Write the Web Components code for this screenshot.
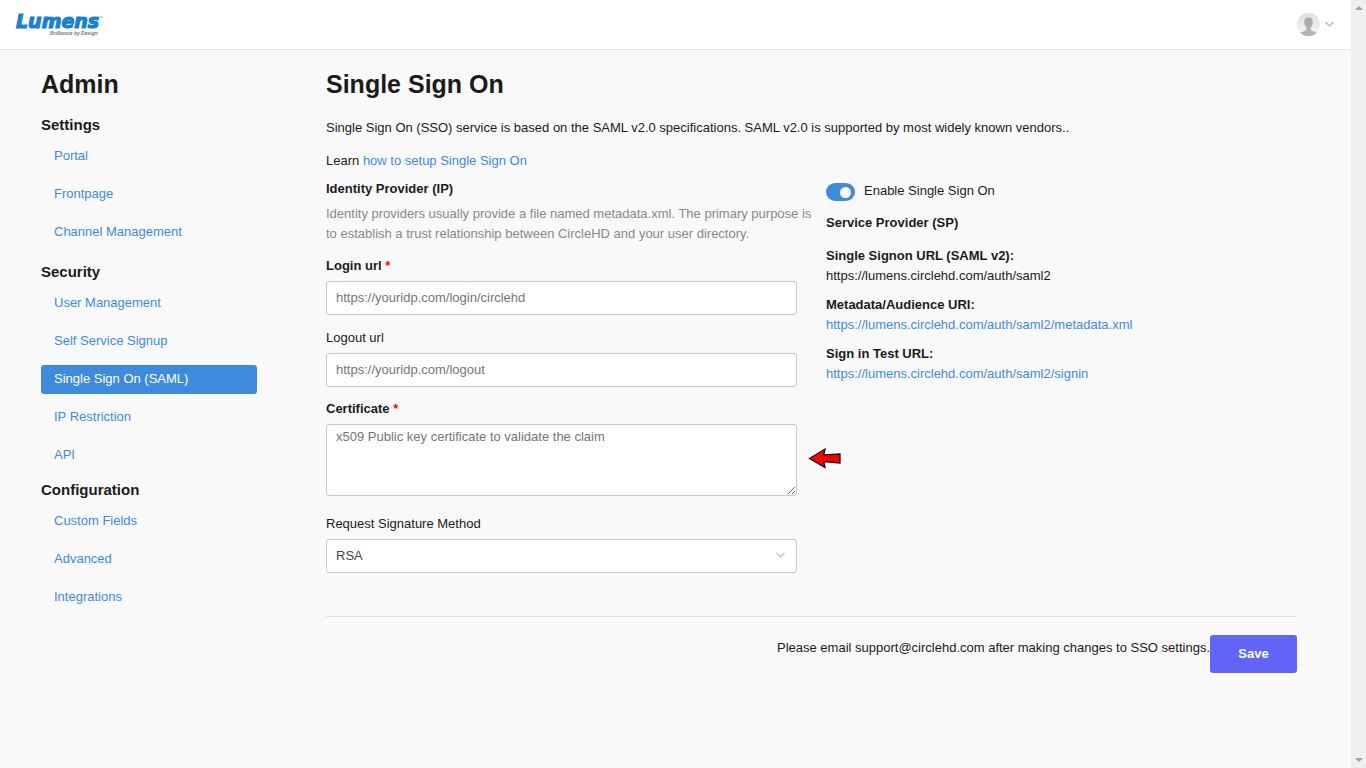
<!DOCTYPE html>
<html lang="en">
<head>
<meta charset="utf-8">
<title>Single Sign On - Admin</title>
<style>
  body { margin: 0; background: #f9f9f9; color: #1b1b1b; font: 13px/20px "Liberation Sans", Arial, sans-serif; }
</style>
</head>
<body>
<app-shell>
  <top-bar slot="header"></top-bar>
  <side-nav slot="nav">
    <nav-group heading="Settings">
      <nav-item>Portal</nav-item>
      <nav-item>Frontpage</nav-item>
      <nav-item>Channel Management</nav-item>
    </nav-group>
    <nav-group heading="Security">
      <nav-item>User Management</nav-item>
      <nav-item>Self Service Signup</nav-item>
      <nav-item active>Single Sign On (SAML)</nav-item>
      <nav-item>IP Restriction</nav-item>
      <nav-item>API</nav-item>
    </nav-group>
    <nav-group heading="Configuration" compact>
      <nav-item>Custom Fields</nav-item>
      <nav-item>Advanced</nav-item>
      <nav-item>Integrations</nav-item>
    </nav-group>
  </side-nav>
  <sso-page></sso-page>
</app-shell>

<script>
const define = (name, markup, setup) => {
  const template = document.createElement('template');
  template.innerHTML = markup;
  customElements.define(name, class extends HTMLElement {
    constructor() {
      super();
      this.attachShadow({ mode: 'open' }).append(template.content.cloneNode(true));
    }
    connectedCallback() { if (setup) setup(this, this.shadowRoot); }
  });
};

define('app-shell', `
  <style>
    :host { display: flex; min-height: 100vh; }
    .page { flex: 1; min-width: 0; }
    .body { display: grid; grid-template-columns: 216px minmax(0, 1fr); gap: 69px; padding: 18px 54px 40px 41px; }
  </style>
  <div class="page">
    <slot name="header"></slot>
    <div class="body"><slot name="nav"></slot><slot></slot></div>
  </div>
  <scroll-track></scroll-track>
`);

define('scroll-track', `
  <style>
    :host { display: flex; flex-direction: column; justify-content: space-between; align-items: center;
      width: 15px; height: 100vh; padding: 6px 0; box-sizing: border-box; background: #f0f0f0; position: sticky; top: 0; }
    svg { display: block; fill: #a0a0a0; }
  </style>
  <svg width="8" height="4" aria-hidden="true"><path d="M0 4 4 0 8 4Z"/></svg>
  <svg width="8" height="4" aria-hidden="true"><path d="M0 0 4 4 8 0Z"/></svg>
`);

define('top-bar', `
  <style>
    :host { display: block; }
    header { display: flex; justify-content: space-between; align-items: center; height: 49px; padding: 0 17px 0 15px;
      background: #fff; border-bottom: 1px solid #e2e2e2; }
    a, svg { display: block; }
    button { display: flex; align-items: center; gap: 5px; padding: 0; border: 0; background: none; }
  </style>
  <header>
    <a href="#" aria-label="Lumens home">
      <svg width="90" height="28" viewBox="0 0 90 28">
        <text x="1" y="17" font-family="DejaVu Sans, sans-serif" font-weight="700" font-style="italic" font-size="19" fill="#1b80d2" stroke="#1b80d2" stroke-width="1.200">Lumens</text>
        <text x="82" y="9" font-family="Liberation Sans, sans-serif" font-size="6" fill="#6cb3e4">™</text>
        <text x="35" y="24" font-family="Liberation Sans, sans-serif" font-weight="700" font-style="italic" font-size="5" fill="#777">Brilliance by Design</text>
      </svg>
    </a>
    <button type="button" aria-label="Account">
      <svg width="23" height="23" viewBox="0 0 23 23">
        <defs>
          <linearGradient id="bg" x2="0" y2="1"><stop stop-color="#dedede"/><stop offset="1" stop-color="#f6f6f6"/></linearGradient>
          <linearGradient id="fg" x2="0" y2="1"><stop stop-color="#a8a8a8"/><stop offset="1" stop-color="#b6b6b6"/></linearGradient>
          <clipPath id="c"><circle cx="11.5" cy="11.5" r="11.5"/></clipPath>
        </defs>
        <g clip-path="url(#c)">
          <path fill="url(#bg)" d="M0 0h23v23H0z"/>
          <path fill="url(#fg)" d="M11.5 4.4c2.800 0 4.300 1.800 4.300 4.500 0 2.200-.8 4-2 5.100v2.700c.6 1.600 4.500 1.800 6.700 3.300V23h-18v-3c2.200-1.500 6.100-1.700 6.700-3.300V14c-1.200-1.100-2-2.900-2-5.100 0-2.700 1.500-4.500 4.300-4.500z"/>
        </g>
      </svg>
      <svg width="9" height="8" viewBox="0 0 9 8" fill="none" stroke="#bdbdbd" stroke-width="1.500"><path d="M.5 1 4.500 5 8.500 1"/></svg>
    </button>
  </header>
`);

define('side-nav', `
  <style>
    :host { display: block; }
    h1 { margin: 0 0 13px; font-size: 25px; line-height: 32px; }
    nav { display: block; }
  </style>
  <h1>Admin</h1>
  <nav aria-label="Admin"><slot></slot></nav>
`);

define('nav-group', `
  <style>
    :host { display: block; margin-bottom: 13px; }
    :host([compact]) { margin-top: -5px; }
    h2 { margin: 0 0 5px; font-size: 15px; line-height: 24px; }
    div { display: grid; gap: 9px; }
  </style>
  <h2></h2>
  <div><slot></slot></div>
`, (host, root) => { root.querySelector('h2').textContent = host.getAttribute('heading'); });

define('nav-item', `
  <style>
    :host { display: block; }
    a { display: block; padding: 4px 13px 5px; border-radius: 3px; color: #3e8bdd; text-decoration: none; }
    :host([active]) a { background: #3e8bdd; color: #fff; }
  </style>
  <a href="#"><slot></slot></a>
`, (host, root) => { if (host.hasAttribute('active')) root.querySelector('a').setAttribute('aria-current', 'page'); });

define('form-field', `
  <style>
    :host { display: block; margin-bottom: 13px; }
    label { display: block; margin-bottom: 5px; }
    :host([required]) label { font-weight: 700; }
    i { color: #f00; font-style: normal; }
    input, textarea, select { display: block; box-sizing: border-box; width: 100%; height: 34px; margin: 0; padding: 0 9px 1px;
      border: 1px solid #c8c8c8; border-radius: 3px; background: #fff; color: #444; font: inherit; }
    textarea { height: 72px; padding: 2px 9px; }
    select { appearance: none; }
    ::placeholder { color: #757575; }
    .control { display: grid; align-items: center; }
    .control > * { grid-area: 1 / 1; }
    svg { justify-self: end; margin-right: 12px; pointer-events: none; }
  </style>
  <label for="field"></label>
  <div class="control"></div>
`, (host, root) => {
  const label = root.querySelector('label');
  label.textContent = host.getAttribute('label');
  if (host.hasAttribute('required')) label.insertAdjacentHTML('beforeend', ' <i>*</i>');
  const kind = host.getAttribute('kind') || 'input';
  const control = document.createElement(kind);
  control.id = 'field';
  const box = root.querySelector('.control');
  box.append(control);
  if (kind === 'select') {
    control.add(new Option(host.getAttribute('value')));
    box.insertAdjacentHTML('beforeend', '<svg width="9" height="8" viewBox="0 0 9 8" fill="none" stroke="#c4c4c4" stroke-width="1.500"><path d="M.5 1 4.500 5 8.500 1"/></svg>');
  } else control.placeholder = host.getAttribute('placeholder');
});

define('toggle-switch', `
  <style>
    :host { display: flex; align-items: flex-end; gap: 9px; }
    input { appearance: none; display: flex; align-items: center; justify-content: flex-end; box-sizing: border-box;
      width: 29px; height: 18px; margin: 0; padding: 0 4px; border-radius: 9px; background: #3e8bdd; }
    input::before { content: ""; width: 11px; height: 11px; border-radius: 50%; background: #fff; }
    input:not(:checked) { justify-content: flex-start; background: #bbb; }
  </style>
  <input type="checkbox" id="toggle" checked><label for="toggle"><slot></slot></label>
`);

define('info-entry', `
  <style>
    :host { display: block; margin-bottom: 9px; }
    strong { display: block; }
  </style>
  <strong></strong><slot></slot>
`, (host, root) => { root.querySelector('strong').textContent = host.getAttribute('label'); });

define('sso-page', `
  <style>
    :host { display: block; }
    a { color: #3e8bdd; text-decoration: none; }
    h1 { margin: 0 0 18px; font-size: 25px; line-height: 32px; }
    p { margin: 0 0 13px; }
    .learn { margin-bottom: 8px; }
    h2 { margin: 0 0 5px; font-size: 13px; line-height: 20px; }
    .columns { display: grid; grid-template-columns: 1fr 1fr; gap: 29px; padding-bottom: 30px; border-bottom: 1px solid #e2e2e2; }
    .help { margin: 0 -16px 12px 0; color: #888; }
    .certificate { position: relative; margin: -1px 0 18px; }
    .pointer { position: absolute; left: 100%; top: 48px; margin-left: 11px; }
    .provider { padding-top: 2px; }
    .provider h2 { margin: 12px 0 13px; }
    footer { display: flex; justify-content: flex-end; align-items: flex-start; padding-top: 18px; }
    footer span { padding-top: 3px; }
    button { width: 87px; height: 38px; padding: 0; border: 0; border-radius: 3px; background: #6264f8; color: #fff; font: inherit; font-weight: 700; }
  </style>
  <h1>Single Sign On</h1>
  <p>Single Sign On (SSO) service is based on the SAML v2.0 specifications. SAML v2.0 is supported by most widely known vendors..</p>
  <p class="learn">Learn <a href="#">how to setup Single Sign On</a></p>
  <form>
    <div class="columns">
      <section>
        <h2>Identity Provider (IP)</h2>
        <p class="help">Identity providers usually provide a file named metadata.xml. The primary purpose is to establish a trust relationship between CircleHD and your user directory.</p>
        <form-field label="Login url" placeholder="https://youridp.com/login/circlehd" required></form-field>
        <form-field label="Logout url" placeholder="https://youridp.com/logout"></form-field>
        <div class="certificate">
          <form-field kind="textarea" label="Certificate" placeholder="x509 Public key certificate to validate the claim" required></form-field>
          <svg class="pointer" width="34" height="22" viewBox="0 0 34 22" aria-hidden="true"><path d="M1.500 11.500 17 2 15.800 7.800 32 7v9L15.800 14.700 17 20.500Z" fill="#f00" stroke="#111" stroke-width="1.300"/></svg>
        </div>
        <form-field kind="select" label="Request Signature Method" value="RSA"></form-field>
      </section>
      <section class="provider">
        <toggle-switch>Enable Single Sign On</toggle-switch>
        <h2>Service Provider (SP)</h2>
        <info-entry label="Single Signon URL (SAML v2):">https://lumens.circlehd.com/auth/saml2</info-entry>
        <info-entry label="Metadata/Audience URI:"><a href="#">https://lumens.circlehd.com/auth/saml2/metadata.xml</a></info-entry>
        <info-entry label="Sign in Test URL:"><a href="#">https://lumens.circlehd.com/auth/saml2/signin</a></info-entry>
      </section>
    </div>
    <footer><span>Please email support@circlehd.com after making changes to SSO settings.</span><button type="button">Save</button></footer>
  </form>
`);
</script>
</body>
</html>
